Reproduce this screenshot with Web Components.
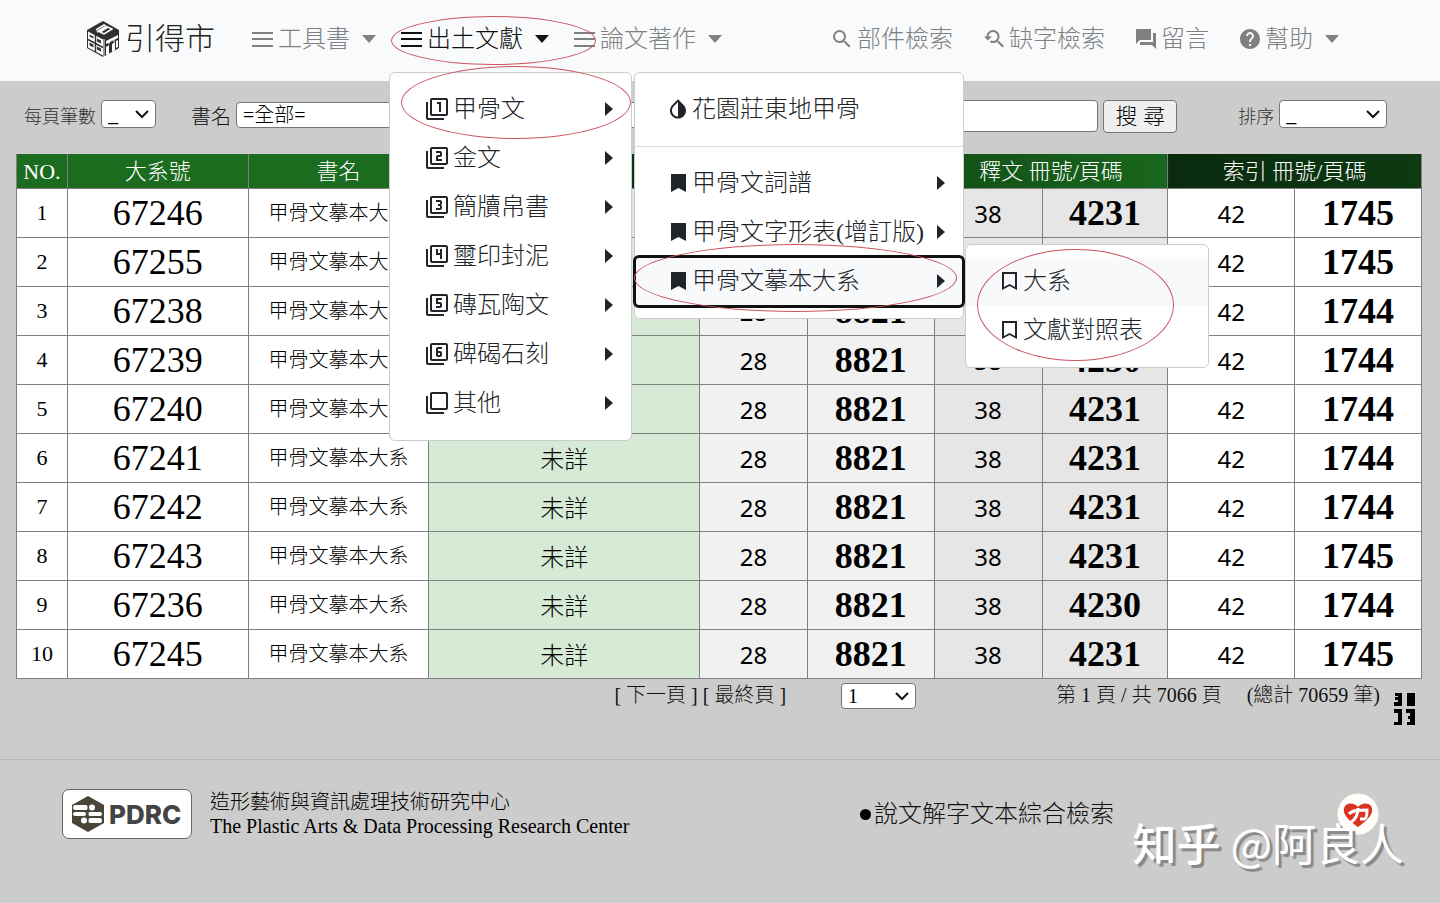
<!DOCTYPE html>
<html lang="zh-Hant">
<head>
<meta charset="utf-8">
<title>引得市</title>
<style>
body{margin:0;background:#ccc;color:#000;font-family:"Liberation Serif","Noto Sans CJK TC",serif;font-weight:300}
</style>
</head>
<body>
<site-nav></site-nav>
<main>
<search-bar></search-bar>
<index-table></index-table>
<page-controls></page-controls>
</main>
<site-footer></site-footer>
<script>
const ICONS={
 menu:'<path d="M1 5h21v2H1zM1 11h21v2H1zM1 18h21v2H1z"/>',
 search:'<path d="M15.5 14h-.79l-.28-.27A6.471 6.471 0 0 0 16 9.5 6.5 6.5 0 1 0 9.5 16c1.61 0 3.09-.59 4.23-1.57l.27.28v.79l5 4.99L20.49 19l-4.99-5zm-6 0C7.01 14 5 11.99 5 9.5S7.01 5 9.5 5 14 7.01 14 9.5 11.99 14 9.5 14z"/>',
 research:'<path d="M17.01 14h-.8l-.27-.27c.98-1.14 1.57-2.61 1.57-4.23 0-3.59-2.91-6.5-6.5-6.5s-6.5 3-6.5 6.5H2l3.84 4 4.16-4H6.51C6.51 7 8.53 5 11.01 5s4.5 2.01 4.5 4.5c0 2.48-2.02 4.5-4.5 4.5-.65 0-1.26-.14-1.82-.38L7.71 15.1c.97.57 2.09.9 3.3.9 1.61 0 3.08-.59 4.22-1.57l.27.27v.79l5.01 5L22 19l-4.99-5z"/>',
 talk:'<path d="M22 6h-3v9H6v3h12l4 4zM17 13V2H2v15l4-4z"/>',
 help:'<path d="M12 2C6.48 2 2 6.48 2 12s4.48 10 10 10 10-4.48 10-10S17.52 2 12 2zm1 17h-2v-2h2v2zm2.07-7.75l-.9.92C13.45 12.9 13 13.5 13 15h-2v-.5c0-1.1.45-2.1 1.17-2.83l1.24-1.26c.37-.36.59-.86.59-1.41 0-1.1-.9-2-2-2s-2 .9-2 2H8c0-2.21 1.79-4 4-4s4 1.79 4 4c0 .88-.36 1.68-.93 2.25z"/>',
 bookmark:'<path d="M5 3h15v18l-7.500-4L5 21z"/>',
 outline:'<path d="M5 3h15v18l-7.500-4L5 21zM7 5v13l5.500-3 5.500 3V5z" fill-rule="evenodd"/>',
 drop:'<path d="M17.66 7.93L12 2.27 6.34 7.93c-3.12 3.12-3.12 8.19 0 11.31C7.9 20.8 9.95 21.58 12 21.58c2.05 0 4.1-.78 5.66-2.34 3.12-3.12 3.12-8.19 0-11.31zM12 19.59c-1.6 0-3.11-.62-4.24-1.76C6.62 16.69 6 15.19 6 13.59s.62-3.11 1.76-4.24L12 5.1v14.49z"/>'
};
const FRAME='M3 5H1v16c0 1.1.9 2 2 2h16v-2H3V5zm18-4H7c-1.1 0-2 .9-2 2v14c0 1.1.9 2 2 2h14c1.1 0 2-.9 2-2V3c0-1.1-.9-2-2-2zm0 16H7V3h14v14z';
['','M14 15h2V5h-4v2h2z',
 'M17 13h-4v-2h2c1.1 0 2-.9 2-2V7c0-1.110-.9-2-2-2h-4v2h4v2h-2c-1.1 0-2 .89-2 2v4h6v-2z',
 'M17 13v-1.5c0-.83-.67-1.5-1.5-1.5.83 0 1.5-.67 1.5-1.5V7c0-1.11-.9-2-2-2h-4v2h4v2h-2v2h2v2h-4v2h4c1.1 0 2-.89 2-2z',
 'M15 15h2V5h-2v4h-2V5h-2v6h4z',
 'M17 13v-2c0-1.11-.9-2-2-2h-2V7h4V5h-6v6h4v2h-4v2h4c1.1 0 2-.89 2-2z',
 'M13 15h2c1.1 0 2-.89 2-2v-2c0-1.11-.9-2-2-2h-2V7h4V5h-4c-1.1 0-2 .89-2 2v6c0 1.11.9 2 2 2zm0-4h2v2h-2v-2z'
].forEach((d,i)=>{ICONS['filter'+i]='<path d="'+FRAME+'"/><path d="'+d+'"/>'});

const define=(name,html)=>customElements.define(name,class extends HTMLElement{
 constructor(){super();this.attachShadow({mode:'open'})}
 connectedCallback(){
  const t=document.createElement('template');
  t.innerHTML=typeof html==='function'?html(this):html;
  this.shadowRoot.replaceChildren(t.content.cloneNode(true));
 }
});

define('ui-icon',el=>`<style>:host{display:block;flex:none;width:24px;height:24px}svg{display:block;width:100%;height:100%;fill:currentColor}</style>
<svg viewBox="0 0 24 24" aria-hidden="true">${ICONS[el.getAttribute('name')]}</svg>`);

/* red ellipse; inset comes from the user of the element */
define('mark-ring',`<style>:host{position:absolute;z-index:9;border:1px solid #cc5560;border-radius:50%;box-sizing:border-box;pointer-events:none}</style>`);

define('nav-item',el=>{
 const tag=el.hasAttribute('menu')?'button':'a';
 return `<style>
 :host{display:block;position:relative;color:#7f8080;font-size:24px;line-height:36px}
 :host([active]){color:#111}
 a,button{display:flex;align-items:center;gap:3px;font:inherit;color:inherit;background:none;border:0;padding:0;text-decoration:none;white-space:nowrap}
 .caret{margin-left:9px;border:7px solid transparent;border-top:8px solid;border-bottom:0}
 </style>
 <${tag} ${tag==='a'?'href="#"':'type="button"'}><ui-icon name="${el.getAttribute('icon')}"></ui-icon><span>${el.getAttribute('label')}</span>${tag==='button'?'<span class="caret"></span>':''}</${tag}><slot></slot>`});

define('menu-panel',`<style>
 :host{display:block;position:absolute;z-index:5;box-sizing:border-box;background:#fff;border:1px solid #ccc;border-radius:6px;padding:12px 0;color:#212529}
 </style><slot></slot>`);

define('menu-item',el=>`<style>
 :host{display:block;position:relative;font-size:24px;line-height:49px}
 a{display:flex;align-items:center;gap:var(--gap,2px);padding:0 18px 0 var(--start,31px);height:49px;color:inherit;text-decoration:none;white-space:nowrap}
 :host([soft]) a{background:#f8f9fa}
 :host([focused]) a{background:#f8f9fa;outline:3px solid #111;outline-offset:-1px;border-radius:4px}
 .caret{margin-left:auto;border:7px solid transparent;border-left:8px solid;border-right:0}
 </style>
 <a href="#"><ui-icon name="${el.getAttribute('icon')}"></ui-icon><span>${el.getAttribute('label')}</span>${el.hasAttribute('more')?'<span class="caret"></span>':''}</a><slot></slot>`);

define('site-nav',`<style>
 :host{display:block;background:#f8fafc}
 nav{display:flex;align-items:center;height:81px;box-sizing:border-box;padding:0 101px 4px 86px;gap:24px}
 .brand{display:flex;align-items:center;gap:5px;margin-right:12px;font-size:30px;line-height:44px;color:#222;text-decoration:none}
 .brand svg{width:34px;height:38px}
 .end{display:flex;gap:29px;margin-left:auto}
 .main{width:243px;top:51px;left:-11px;--start:35px;--gap:4px}
 .second{width:330px;top:-13px;left:calc(100% + 3px);--start:31px;--gap:2px}
 .third{width:244px;top:-13px;left:calc(100% + 2px)}
 hr{border:0;border-top:1px solid #ddd;margin:12px 0}
 </style>
 <nav>
 <a class="brand" href="#"><svg viewBox="0 0 34 38" aria-hidden="true">
 <path d="M17 1 33 10v18L17 37 1 28V10z" fill="#303030"/>
 <path d="M2 11.500l15 8v16l-15-8z" fill="#fff"/><path d="M2 19.500l15 8M9.500 15v17" fill="none" stroke="#333" stroke-width="1.500"/>
 <path d="M3.500 14.500l4 2v2l-4-2zM11 18.500l4 2v3l-4-2zM3.500 22.500l4 2v3l-4-2zM11 26.500l4 2v3l-4-2z" fill="#333"/>
 <path d="M10 10l8-5 3 2-7 4M14 12l8-5 4 2-8 5-6-3M19 7l-8 5" fill="none" stroke="#fff" stroke-width="1.500"/>
 <path d="M20 24v-3l12-6v3zM20 27l3-2v9l-3 1zM26 24l3-2v8l-3 2zM30 21l2-1v7l-2 1z" fill="#fff"/>
 <path d="M18 19v18M23 20v4M28 18v4" stroke="#fff"/></svg><span>引得市</span></a>
 <nav-item menu icon="menu" label="工具書"></nav-item>
 <nav-item menu active icon="menu" label="出土文獻">
  <mark-ring style="inset:-5px -47px -8px -9px"></mark-ring>
  <menu-panel class="main">
   <menu-item icon="filter1" label="甲骨文" more>
    <mark-ring style="inset:-19px 0 -5px 11px"></mark-ring>
    <menu-panel class="second">
     <menu-item icon="drop" label="花園莊東地甲骨"></menu-item>
     <hr>
     <menu-item icon="bookmark" label="甲骨文詞譜" more></menu-item>
     <menu-item icon="bookmark" label="甲骨文字形表(增訂版)" more></menu-item>
     <menu-item icon="bookmark" label="甲骨文摹本大系" more focused>
      <mark-ring style="inset:-13px 6px -6px -1px"></mark-ring>
      <menu-panel class="third">
       <mark-ring style="inset:4px 34px 6px 11px"></mark-ring>
       <menu-item icon="outline" label="大系" soft></menu-item>
       <menu-item icon="outline" label="文獻對照表"></menu-item>
      </menu-panel>
     </menu-item>
    </menu-panel>
   </menu-item>
   <menu-item icon="filter2" label="金文" more></menu-item>
   <menu-item icon="filter3" label="簡牘帛書" more></menu-item>
   <menu-item icon="filter4" label="璽印封泥" more></menu-item>
   <menu-item icon="filter5" label="磚瓦陶文" more></menu-item>
   <menu-item icon="filter6" label="碑碣石刻" more></menu-item>
   <menu-item icon="filter0" label="其他" more></menu-item>
  </menu-panel>
 </nav-item>
 <nav-item menu icon="menu" label="論文著作"></nav-item>
 <div class="end">
 <nav-item icon="search" label="部件檢索"></nav-item>
 <nav-item icon="research" label="缺字檢索"></nav-item>
 <nav-item icon="talk" label="留言"></nav-item>
 <nav-item menu icon="help" label="幫助"></nav-item>
 </div>
 </nav>`);

const FIELD=`select,input,button{box-sizing:border-box;border:1px solid #767676;border-radius:4px;background-color:#fff;color:#000;font:inherit;font-size:20px}
 select{appearance:none;padding:0 24px 0 6px;background-image:url("data:image/svg+xml,%3Csvg xmlns='http://www.w3.org/2000/svg' width='14' height='9'%3E%3Cpath d='M1 1l6 6 6-6' fill='none' stroke='%23111' stroke-width='2'/%3E%3C/svg%3E");background-repeat:no-repeat;background-position:right 6px center}`;

define('search-bar',`<style>${FIELD}
 :host{display:block}
 form{display:flex;align-items:flex-start;padding:19px 53px 20px 24px;height:73px;box-sizing:border-box;line-height:26px}
 label{font-size:18px;padding-top:3px;margin-right:5px;color:#333;white-space:nowrap;line-height:28px}
 label.big{font-size:20px;margin-left:35px;color:#111}
 label.far{margin-left:61px}
 select{height:28px}
 .size{width:55px}.book{flex:1 1 460px;margin-top:2px;height:26px;line-height:24px;min-width:0}
 .order{width:108px}
 input{flex:1 1 400px;height:32px;margin-left:5px;min-width:0}
 button{width:74px;height:33px;margin-left:5px;background:#efefef;padding:0;font-size:22px}
 </style>
 <form>
 <label for="size">每頁筆數</label><select id="size" class="size"><option>_</option></select>
 <label for="book" class="big">書名</label><select id="book" class="book"><option>=全部=</option></select>
 <input type="text" aria-label="關鍵字"><button type="button">搜 尋</button>
 <label for="order" class="far">排序</label><select id="order" class="order"><option>_</option></select>
 </form>`);

const ROWS=[['67246','4231','1745'],['67255','4231','1745'],['67238','4231','1744'],['67239','4230','1744'],['67240','4231','1744'],['67241','4231','1744'],['67242','4231','1744'],['67243','4231','1745'],['67236','4230','1744'],['67245','4231','1745']];
define('index-table',()=>`<style>
 :host{display:block;padding:0 18px 0 16px}
 table{width:100%;table-layout:fixed;border-collapse:collapse;text-align:center}
 th,td{border:1px solid #808080;padding:0;white-space:nowrap}
 th{height:32px;padding-top:2px;font-size:22px;line-height:30px;font-weight:300;color:#fff;background:#1c6c20;border-bottom:0;border-top:0}
 th.a{background:linear-gradient(90deg,#1c6c20,#071d09)}
 th.c{background:linear-gradient(90deg,#135016,#19661d)}
 th.d{background:linear-gradient(90deg,#0a2a0e,#0d3a12)}
 td{height:48px;background:#fff;line-height:40px}
 .no{font-size:22px}.id{font-size:36px}.name{font-size:20px}
 .un{font-size:24px;background:#d6ead6;padding-top:3px;height:45px}
 .vol{font:24px/40px "Noto Sans",sans-serif;padding-top:2px;height:46px}
 .page{font-size:36px;font-weight:700}
 .b{background-color:#f1f1f1}.c{background-color:#e6e6e6}
 </style>
 <table>
 <colgroup>${[51,181,181,271,108,127,108,126,127,127].map(w=>`<col style="width:calc(100% * ${w} / 1407)">`).join('')}</colgroup>
 <thead><tr><th>NO.</th><th>大系號</th><th>書名</th><th class="a">著錄號</th><th colspan="2">圖版 冊號/頁碼</th><th class="c" colspan="2">釋文 冊號/頁碼</th><th class="d" colspan="2">索引 冊號/頁碼</th></tr></thead>
 <tbody>${ROWS.map((r,i)=>`<tr><td class="no">${i+1}</td><td class="id">${r[0]}</td><td class="name">甲骨文摹本大系</td><td class="un">未詳</td><td class="vol b">28</td><td class="page b">8821</td><td class="vol c">38</td><td class="page c">${r[1]}</td><td class="vol">42</td><td class="page">${r[2]}</td></tr>`).join('')}</tbody>
 </table>`);

define('page-controls',`<style>${FIELD}
 :host{display:block}
 div{display:flex;align-items:flex-start;justify-content:flex-end;padding:4px 25px 0 16px;height:80px;box-sizing:border-box;font-size:20px;line-height:24px;color:#111;white-space:pre}
 a{color:inherit;text-decoration:none}
 select{width:75px;height:26px;margin:0 140px 0 55px}
 .total{margin:0 14px 0 25px}
 svg{width:21px;height:32px;margin-top:10px}
 </style>
 <div><span>[ <a href="#">下一頁</a> ] [ <a href="#">最終頁</a> ]</span><select aria-label="頁碼"><option>1</option></select><span>第 1 頁 / 共 7066 頁</span><span class="total">(總計 70659 筆)</span><svg viewBox="0 0 21 32" aria-hidden="true"><path d="M1 0h7v13H0V9h4V7H1V4h3V3H1zM13 0h8v13h-8zM0 16h8v16H0v-3h4v-9H0zM12 16h9v16h-8v-3h3v-3h-2v-3h2v-3h-4z"/></svg></div>`);

define('site-footer',`<style>
 :host{display:block;border-top:1px solid #b8b8b8}
 footer{display:flex;align-items:flex-start;padding:29px 39px 64px 62px;position:relative}
 .logo{display:flex;align-items:center;gap:4px;width:130px;height:50px;box-sizing:border-box;border:1px solid #666;border-radius:7px;background:#fff;padding:0 0 0 8px;font:800 26px Inter,sans-serif;color:#444;text-decoration:none}
 .logo svg{width:34px;height:38px;flex:none}
 .org{margin:1px 0 0 18px;font-size:20px;line-height:24px}
 .side{display:flex;flex:none;align-items:flex-start;margin-left:auto}
 .text{display:flex;align-items:center;gap:3px;color:#111;text-decoration:none;font-size:24px;line-height:50px}
 .dot{width:11px;height:11px;border-radius:50%;background:#000}
 .heart{width:42px;height:42px;margin:4px 22px 0 223px}
 .credit{position:absolute;right:36px;top:56px;font:500 44px/52px "Noto Sans CJK SC",sans-serif;color:#fff;text-shadow:3px 3px 1px #888;white-space:pre}
 .credit span{font-weight:400}
 </style>
 <footer>
 <a class="logo" href="#"><svg viewBox="0 0 34 38" aria-hidden="true"><path d="M17 1l16 9v18l-16 9-16-9V10z" fill="#494638"/><g fill="#fff"><rect x="2" y="10" width="15" height="5" rx="2.500"/><circle cx="21" cy="12.500" r="3"/><rect x="2" y="17" width="13" height="4" rx="2"/><rect x="17" y="17" width="14" height="4" rx="2"/><circle cx="13" cy="25.500" r="3"/><rect x="17" y="23" width="14" height="5" rx="2.500"/></g><path d="M17 8v23" stroke="#494638"/></svg><span>PDRC</span></a>
 <p class="org">造形藝術與資訊處理技術研究中心<br>The Plastic Arts &amp; Data Processing Research Center</p>
 <div class="side"><a class="text" href="#"><span class="dot"></span>說文解字文本綜合檢索</a>
 <svg class="heart" viewBox="0 0 42 42" aria-hidden="true"><circle cx="21" cy="21" r="20.500" fill="#fffdf8"/><path d="M21 34C7 24 5 18 8 13c3-4 10-3 13 1 3-4 10-5 13-1 3 5 1 11-13 21z" fill="#dc3222"/><path d="M12 21c3-4 11-4 18-4 0 6-1 9-3 9h-4M21 15c0 7-3 12-8 15" fill="none" stroke="#fff" stroke-width="3"/></svg></div>
 <div class="credit">知乎 <span>@阿良人</span></div>
 </footer>`);
</script>
</body>
</html>
